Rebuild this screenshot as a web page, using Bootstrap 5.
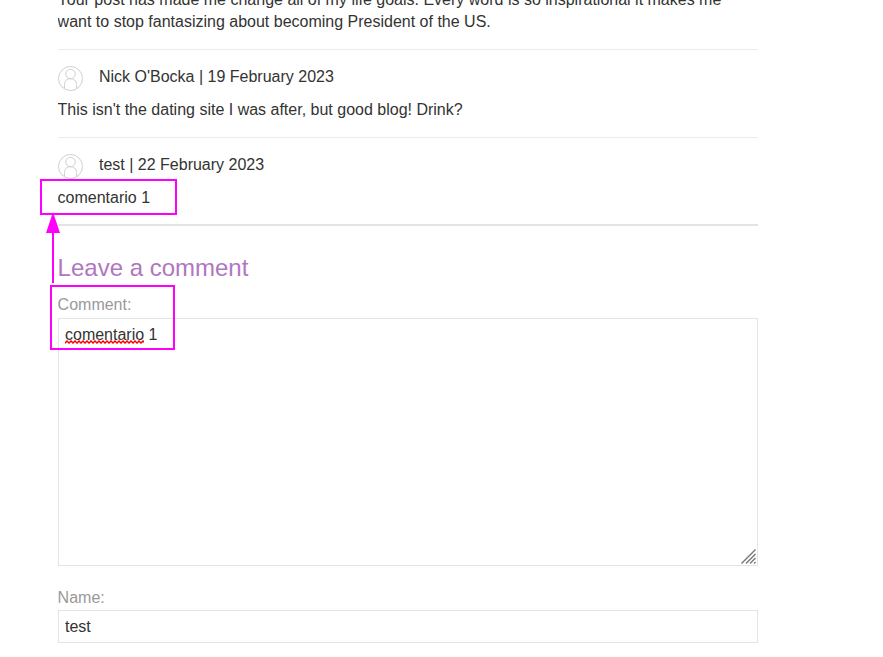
<!DOCTYPE html>
<html lang="en">
<head>
<meta charset="utf-8">
<meta name="viewport" content="width=device-width, initial-scale=1">
<title>Blog comments</title>
<link href="https://cdn.jsdelivr.net/npm/bootstrap@5.3.0/dist/css/bootstrap.min.css" rel="stylesheet">
<style>
  body { font-family: "Liberation Sans", Arial, sans-serif; font-size: 16px; line-height: 22px; color: #333332; height: 657px; }
  .blog { width: 700.4px; margin-left: 57.6px; }
  .comment p { margin: 0 0 11px; }
  .comment + .comment { border-top: 1px solid #ececec; padding-top: 16px; }
  .comment p:last-child { margin-bottom: 16px; }
  .first-comment { margin-top: -11px; }
  .last-comment p:last-child { margin-bottom: 15px; }
  .avatar { width: 26px; height: 26px; margin: 0 15.4px -4px 0; }
  .leave { border-top: 2px solid #e4e4e4; }
  .leave h2 { color: #b176c0; font-size: 24px; line-height: 28px; font-weight: 400; margin: 28px 0 12px; }
  .leave label { color: #999; height: 22px; }
  .field { border: 1px solid #e4e4e4; border-radius: 0; color: #333332; line-height: 22px; padding: 4px 6.4px; }
  .field-area { height: 248px; margin: 2px 0 21px; padding-top: 5px; }
  .field-name { height: 33px; margin-top: 1px; }
  .squiggle { left: 0; top: 16px; width: 79px; height: 4px; }
  .grip { right: 1px; bottom: 1px; width: 15px; height: 15px; }
  .marks { width: 220px; height: 400px; }
</style>
<script src="https://cdn.jsdelivr.net/npm/bootstrap@5.3.0/dist/js/bootstrap.bundle.min.js"></script>
</head>
<body class="bg-white overflow-hidden position-relative">
<svg class="d-none">
  <symbol id="user" viewBox="0 0 26 26">
    <g fill="none" stroke="#cdd1d1" stroke-width="1">
      <circle cx="12.5" cy="12.5" r="12"/>
      <circle cx="12.5" cy="8" r="4.7"/>
      <path d="M6.5 23V18.5C6.5 14.8 9 12.7 12.5 12.7S18.5 14.8 18.5 18.5V23"/>
    </g>
  </symbol>
</svg>
<main class="blog d-flow-root overflow-hidden">
  <section class="comment first-comment">
    <p>Your post has made me change all of my life goals. Every word is so inspirational it makes me want to stop fantasizing about becoming President of the US.</p>
  </section>
  <section class="comment">
    <p class="d-flex align-items-start"><svg class="avatar flex-shrink-0"><use href="#user"/></svg><span>Nick O'Bocka | 19 February 2023</span></p>
    <p>This isn't the dating site I was after, but good blog! Drink?</p>
  </section>
  <section class="comment last-comment">
    <p class="d-flex align-items-start"><svg class="avatar flex-shrink-0"><use href="#user"/></svg><span>test | 22 February 2023</span></p>
    <p>comentario 1</p>
  </section>
  <form class="leave">
    <h2>Leave a comment</h2>
    <label class="d-block">Comment:</label>
    <div class="form-control field field-area position-relative" role="textbox" aria-multiline="true"><span class="position-relative d-inline-block">comentario<svg class="squiggle position-absolute"><defs><pattern id="zig" width="4" height="4" patternUnits="userSpaceOnUse"><path d="M-1 4L2 1L5 4" fill="none" stroke="#f00" stroke-width="1.5"/></pattern></defs><rect width="80" height="4" fill="url(#zig)"/></svg></span> 1
      <svg class="grip position-absolute" viewBox="0 0 15 15"><path d="M.5 14.5L14.5.5M5 14.5L14.5 5M9 14.5L14.5 9M13 14.5L14.5 13" stroke="#777" stroke-width="1.4"/></svg>
    </div>
    <label class="d-block" for="name">Name:</label>
    <input class="form-control field field-name" id="name" type="text" value="test">
  </form>
</main>
<svg class="marks position-absolute top-0 start-0 pe-none" viewBox="0 0 220 400">
  <g fill="none" stroke="#f0f" stroke-width="2">
    <rect x="41" y="180" width="135" height="34"/>
    <rect x="51" y="286" width="123" height="63"/>
    <path d="M53 283V230"/>
  </g>
  <path d="M53 212L60 233H46Z" fill="#f0f"/>
</svg>
</body>
</html>
